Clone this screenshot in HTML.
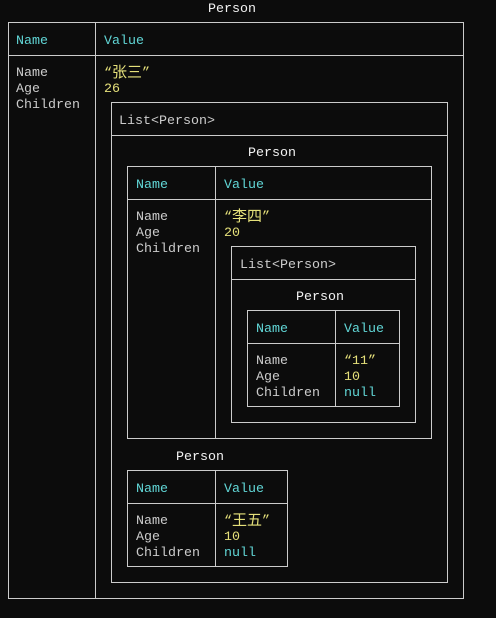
<!DOCTYPE html>
<html><head><style>
html,body{margin:0;padding:0;background:#0c0c0c;width:496px;height:618px;overflow:hidden;position:relative}
.t{position:absolute;font-family:"Liberation Mono","Noto Sans CJK SC",monospace;font-size:13.33px;line-height:16px;color:#cccccc;white-space:pre;margin-top:2px}
.w{color:#f2f2f2}
.c{color:#61d6d6}
.y{color:#e5e07a}
.k{font-size:15px;line-height:16px;vertical-align:top;display:inline-block;height:16px}
.b{position:absolute;border:1px solid #cccccc;box-sizing:border-box}
.h{position:absolute;height:1px;background:#cccccc}
.v{position:absolute;width:1px;background:#cccccc}
</style></head><body>
<div class="t w" style="left:208px;top:0">Person</div>
<div class="b" style="left:8px;top:22px;width:456px;height:577px"></div>
<div class="h" style="left:8px;top:55px;width:456px"></div>
<div class="v" style="left:95px;top:22px;height:577px"></div>
<div class="t c" style="left:16px;top:32px">Name</div>
<div class="t c" style="left:104px;top:32px">Value</div>
<div class="t" style="left:16px;top:64px">Name
Age
Children</div>
<div class="t y" style="left:104px;top:64px">“<span class="k">张三</span>”</div>
<div class="t y" style="left:104px;top:80px">26</div>
<div class="b" style="left:111px;top:102px;width:337px;height:481px"></div>
<div class="h" style="left:111px;top:135px;width:337px"></div>
<div class="t" style="left:119px;top:112px">List&lt;Person&gt;</div>
<div class="t w" style="left:248px;top:144px">Person</div>
<div class="b" style="left:127px;top:166px;width:305px;height:273px"></div>
<div class="h" style="left:127px;top:199px;width:305px"></div>
<div class="v" style="left:215px;top:166px;height:273px"></div>
<div class="t c" style="left:136px;top:176px">Name</div>
<div class="t c" style="left:224px;top:176px">Value</div>
<div class="t" style="left:136px;top:208px">Name
Age
Children</div>
<div class="t y" style="left:224px;top:208px">“<span class="k">李四</span>”</div>
<div class="t y" style="left:224px;top:224px">20</div>
<div class="b" style="left:231px;top:246px;width:185px;height:177px"></div>
<div class="h" style="left:231px;top:279px;width:185px"></div>
<div class="t" style="left:240px;top:256px">List&lt;Person&gt;</div>
<div class="t w" style="left:296px;top:288px">Person</div>
<div class="b" style="left:247px;top:310px;width:153px;height:97px"></div>
<div class="h" style="left:247px;top:343px;width:153px"></div>
<div class="v" style="left:335px;top:310px;height:97px"></div>
<div class="t c" style="left:256px;top:320px">Name</div>
<div class="t c" style="left:344px;top:320px">Value</div>
<div class="t" style="left:256px;top:352px">Name
Age
Children</div>
<div class="t y" style="left:344px;top:352px">“11”
10</div>
<div class="t c" style="left:344px;top:384px">null</div>
<div class="t w" style="left:176px;top:448px">Person</div>
<div class="b" style="left:127px;top:470px;width:161px;height:97px"></div>
<div class="h" style="left:127px;top:503px;width:161px"></div>
<div class="v" style="left:215px;top:470px;height:97px"></div>
<div class="t c" style="left:136px;top:480px">Name</div>
<div class="t c" style="left:224px;top:480px">Value</div>
<div class="t" style="left:136px;top:512px">Name
Age
Children</div>
<div class="t y" style="left:224px;top:512px">“<span class="k">王五</span>”</div>
<div class="t y" style="left:224px;top:528px">10</div>
<div class="t c" style="left:224px;top:544px">null</div>
</body></html>
